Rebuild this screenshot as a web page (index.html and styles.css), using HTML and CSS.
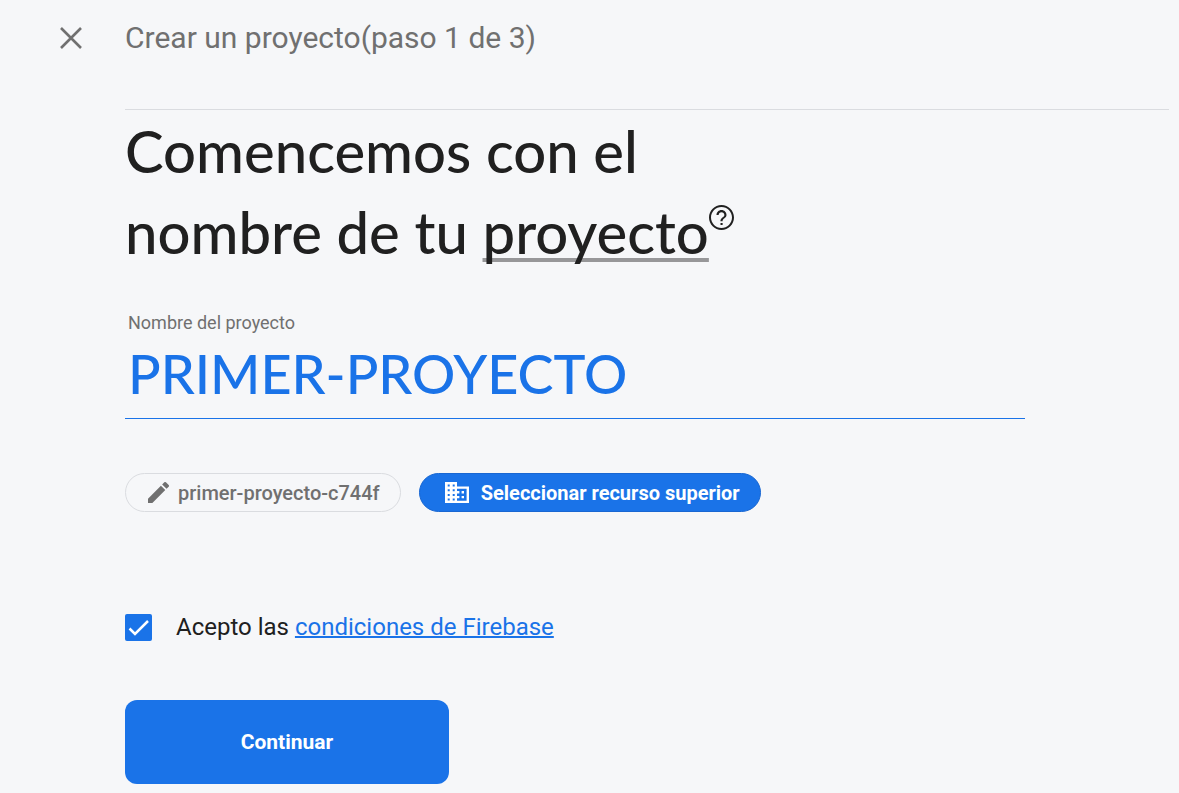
FILE: index.html
```html
<!DOCTYPE html>
<html lang="es">
<head>
<meta charset="utf-8">
<meta name="viewport" content="width=device-width, initial-scale=1">
<title>Crear un proyecto</title>
<link rel="stylesheet" href="styles.css">
</head>
<body>
<header class="topbar">
  <button class="close" type="button" aria-label="Cerrar">
    <svg viewBox="0 0 22 22" width="22" height="22" fill="none" stroke="currentColor" stroke-width="2.6"><path d="M1 1l20 20M21 1L1 21"/></svg>
  </button>
  <p class="step">Crear un proyecto(paso 1 de 3)</p>
</header>
<main class="content">
  <h1 class="heading">Comencemos con el<br>nombre de tu <span class="term">proyecto</span><button class="help" type="button" aria-label="Ayuda"><svg viewBox="2 2 20 20" width="25" height="25" fill="currentColor"><path d="M11.200 16.300h1.700v1.700h-1.700zM12 2C6.480 2 2 6.480 2 12s4.480 10 10 10 10-4.480 10-10S17.520 2 12 2zm0 18.400c-4.630 0-8.400-3.770-8.400-8.400S7.370 3.600 12 3.600s8.400 3.770 8.400 8.400-3.770 8.400-8.400 8.400zm0-14.400c-2.210 0-4 1.790-4 4h1.700c0-1.300 1-2.300 2.300-2.300s2.300 1 2.300 2.300c0 2-3.150 1.900-3.150 5h1.700c0-2.250 3.150-2.500 3.150-5 0-2.210-1.790-4-4-4z"/></svg></button></h1>
  <form class="form">
    <div class="field">
      <label class="field-label" for="name">Nombre del proyecto</label>
      <input class="field-input" id="name" type="text" value="PRIMER-PROYECTO" spellcheck="false">
    </div>
    <div class="chips">
      <button class="chip" type="button">
        <svg viewBox="3 3 18 18" width="21" height="21" fill="currentColor"><path d="M3 17.250V21h3.750L17.810 9.940l-3.750-3.750L3 17.250zM20.710 7.040a1 1 0 0 0 0-1.410l-2.340-2.340a1 1 0 0 0-1.410 0l-1.830 1.830 3.750 3.750 1.830-1.830z"/></svg>
        <span>primer-proyecto-c744f</span>
      </button>
      <button class="chip chip-primary" type="button">
        <svg viewBox="0 0 24 21" width="24" height="21" fill="currentColor"><path fill-rule="evenodd" d="M0 0h12v4.500h12V21H0zM2.700 2.500v2h2v-2zm5 0v2h2v-2zm-5 4.700v2h2v-2zm5 0v2h2v-2zm-5 4.700v2h2v-2zm5 0v2h2v-2zm-5 4.700v2h2v-2zm5 0v2h2v-2zM12 6.700v2.400h2.400v2.400H12v2.400h2.400v2.400H12v2.400h9.600V6.700zm4.600 2.400H19v2.400h-2.400zm0 4.800H19v2.400h-2.400z"/></svg>
        <span>Seleccionar recurso superior</span>
      </button>
    </div>
    <div class="terms">
      <input class="check" id="terms" type="checkbox" checked>
      <svg class="tick" viewBox="0 0 27 27" width="27" height="27" fill="none" stroke="currentColor" stroke-width="2.500"><path d="M4.500 14.500l5.500 5.500L23 7"/></svg>
      <label for="terms">Acepto las <a href="#">condiciones de Firebase</a></label>
    </div>
    <button class="submit" type="submit">Continuar</button>
  </form>
</main>
</body>
</html>
```
FILE: styles.css
```css
* {
  box-sizing: border-box;
}

body {
  margin: 0;
  background: #f6f7f9;
  color: #202020;
  font-family: Roboto, sans-serif;
}

button,
input {
  font: inherit;
  margin: 0;
}

svg {
  display: block;
  flex: none;
}

.topbar {
  display: flex;
  align-items: center;
  height: 76px;
  padding-left: 60px;
  gap: 43px;
  color: #707070;
}

.close {
  padding: 0;
  border: 0;
  background: none;
  color: inherit;
}

.step {
  margin: 0;
  padding-bottom: 2px;
  font-size: 30px;
  font-weight: 400;
}

.content {
  margin: 33px 10px 0 125px;
  border-top: 1px solid #dadce0;
}

.heading {
  margin: 0;
  font-family: Lato, sans-serif;
  font-size: 58px;
  font-weight: 500;
  line-height: 81px;
}

.term {
  text-decoration: underline;
  text-decoration-color: #979799;
  text-decoration-thickness: 4px;
  text-underline-offset: 4px;
  text-decoration-skip-ink: none;
}

.help {
  display: inline-block;
  padding: 0;
  border: 0;
  background: none;
  color: inherit;
  line-height: 0;
  vertical-align: 24px;
}

.form {
  max-width: 900px;
}

.field {
  display: flex;
  flex-direction: column;
  margin-top: 39px;
}

.field-label {
  padding-left: 3px;
  color: #707070;
  font-size: 18px;
  line-height: 24px;
}

.field-input {
  width: 100%;
  height: 84px;
  padding: 0 3px 6px;
  border: 0;
  border-bottom: 1px solid #1a73e8;
  outline: 0;
  background: none;
  color: #1a73e8;
  font-family: Lato, sans-serif;
  font-size: 54px;
  font-weight: 500;
}

.chips {
  display: flex;
  flex-wrap: wrap;
  gap: 18px;
  margin-top: 54px;
}

.chip {
  display: flex;
  align-items: center;
  gap: 9px;
  height: 39px;
  padding: 0 20px 0 22px;
  border: 1px solid #dadce0;
  border-radius: 20px;
  background: none;
  color: #707070;
  font-size: 20px;
  font-weight: 500;
}

.chip-primary {
  gap: 12px;
  padding: 0 20px 0 25px;
  border-color: #1967d2;
  background: #1a73e8;
  color: #fff;
  font-weight: 700;
}

.terms {
  position: relative;
  display: flex;
  align-items: center;
  gap: 24px;
  margin-top: 100px;
  font-size: 24px;
  line-height: 31px;
}

.check {
  width: 27px;
  height: 27px;
  border-radius: 2px;
  background: #1a73e8;
  appearance: none;
}

.tick {
  position: absolute;
  left: 0;
  color: #fff;
  pointer-events: none;
}

.check:not(:checked) + .tick {
  visibility: hidden;
}

.terms a {
  color: #1a73e8;
  text-decoration-thickness: 2px;
}

.submit {
  width: 324px;
  height: 84px;
  margin-top: 57px;
  border: 0;
  border-radius: 12px;
  background: #1a73e8;
  color: #fff;
  font-size: 21px;
  font-weight: 700;
}
```
